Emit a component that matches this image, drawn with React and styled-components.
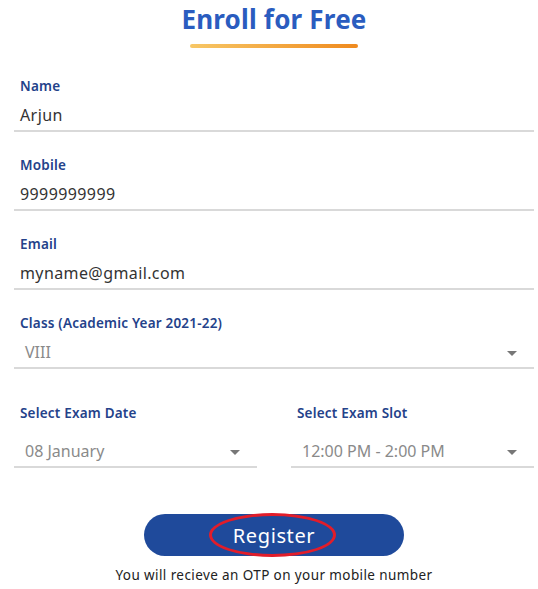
import styled, { createGlobalStyle } from "styled-components";

const GlobalStyle = createGlobalStyle`
  body {
    margin: 0;
    background: #fff;
    font-family: "Noto Sans", "Liberation Sans", sans-serif;
  }
`;

const Page = styled.div`
  width: 538px;
  padding: 0 4px 0 14px;
  box-sizing: border-box;
`;

const Header = styled.div`
  display: flex;
  flex-direction: column;
  align-items: center;
  padding: 1px 0 5px;
`;

const Title = styled.h1`
  margin: 0;
  font-size: 26px;
  line-height: 36px;
  font-weight: 700;
  letter-spacing: 0.2px;
  color: #2a5cbf;
`;

const TitleBar = styled.div`
  margin-top: 7px;
  width: 168px;
  height: 4px;
  border-radius: 2px;
  background: linear-gradient(90deg, #f7c766, #ef8a1e);
`;

const Field = styled.div`
  margin-top: ${(p) => p.$top || 23}px;
  border-bottom: 2px solid #d9d9d9;
  display: flex;
  flex-direction: column;
  gap: ${(p) => p.$gap || 4}px;
`;

const Label = styled.div`
  padding-left: 6px;
  font-size: 13.5px;
  line-height: 20px;
  font-weight: 600;
  letter-spacing: 0.2px;
  color: #24428a;
`;

const Value = styled.div`
  padding-left: 6px;
  font-size: 16px;
  line-height: 30px;
  letter-spacing: 0.4px;
  color: #333;
`;

const SelectValue = styled.div`
  display: flex;
  align-items: center;
  justify-content: space-between;
  padding: 0 17px 0 11px;
  font-size: 16px;
  line-height: 30px;
  color: #8a8a8a;
`;

const Caret = styled.span`
  width: 0;
  height: 0;
  margin-top: 3px;
  border-left: 5px solid transparent;
  border-right: 5px solid transparent;
  border-top: 5px solid #777;
`;

const Row = styled.div`
  display: grid;
  grid-template-columns: 243px 243px;
  justify-content: space-between;
`;

const Footer = styled.div`
  display: flex;
  flex-direction: column;
  align-items: center;
  margin-top: 46px;
`;

const Button = styled.button`
  position: relative;
  width: 260px;
  height: 42px;
  border: none;
  border-radius: 21px;
  background: #1f4a9b;
  color: #fff;
  font-family: inherit;
  font-size: 20px;
  letter-spacing: 0.6px;
  cursor: pointer;
`;

const Circle = styled.span`
  position: absolute;
  left: 65px;
  top: -1px;
  width: 127px;
  height: 44px;
  box-sizing: border-box;
  border: 3px solid #e21d2a;
  border-radius: 50%;
`;

const Note = styled.p`
  margin: 10px 0 0;
  font-size: 13.5px;
  line-height: 18px;
  letter-spacing: 0.4px;
  color: #222;
`;

const TextField = ({ label, value }) => (
  <Field>
    <Label>{label}</Label>
    <Value>{value}</Value>
  </Field>
);

const SelectField = ({ label, value, top, gap }) => (
  <Field $top={top} $gap={gap}>
    <Label>{label}</Label>
    <SelectValue>
      {value}
      <Caret />
    </SelectValue>
  </Field>
);

export default function App() {
  return (
    <Page>
      <GlobalStyle />
      <Header>
        <Title>Enroll for Free</Title>
        <TitleBar />
      </Header>
      <TextField label="Name" value="Arjun" />
      <TextField label="Mobile" value="9999999999" />
      <TextField label="Email" value="myname@gmail.com" />
      <SelectField label="Class (Academic Year 2021-22)" value="VIII" />
      <Row>
        <SelectField label="Select Exam Date" value="08 January" top={34} gap={13} />
        <SelectField label="Select Exam Slot" value="12:00 PM - 2:00 PM" top={34} gap={13} />
      </Row>
      <Footer>
        <Button type="button">
          Register
          <Circle />
        </Button>
        <Note>You will recieve an OTP on your mobile number</Note>
      </Footer>
    </Page>
  );
}
